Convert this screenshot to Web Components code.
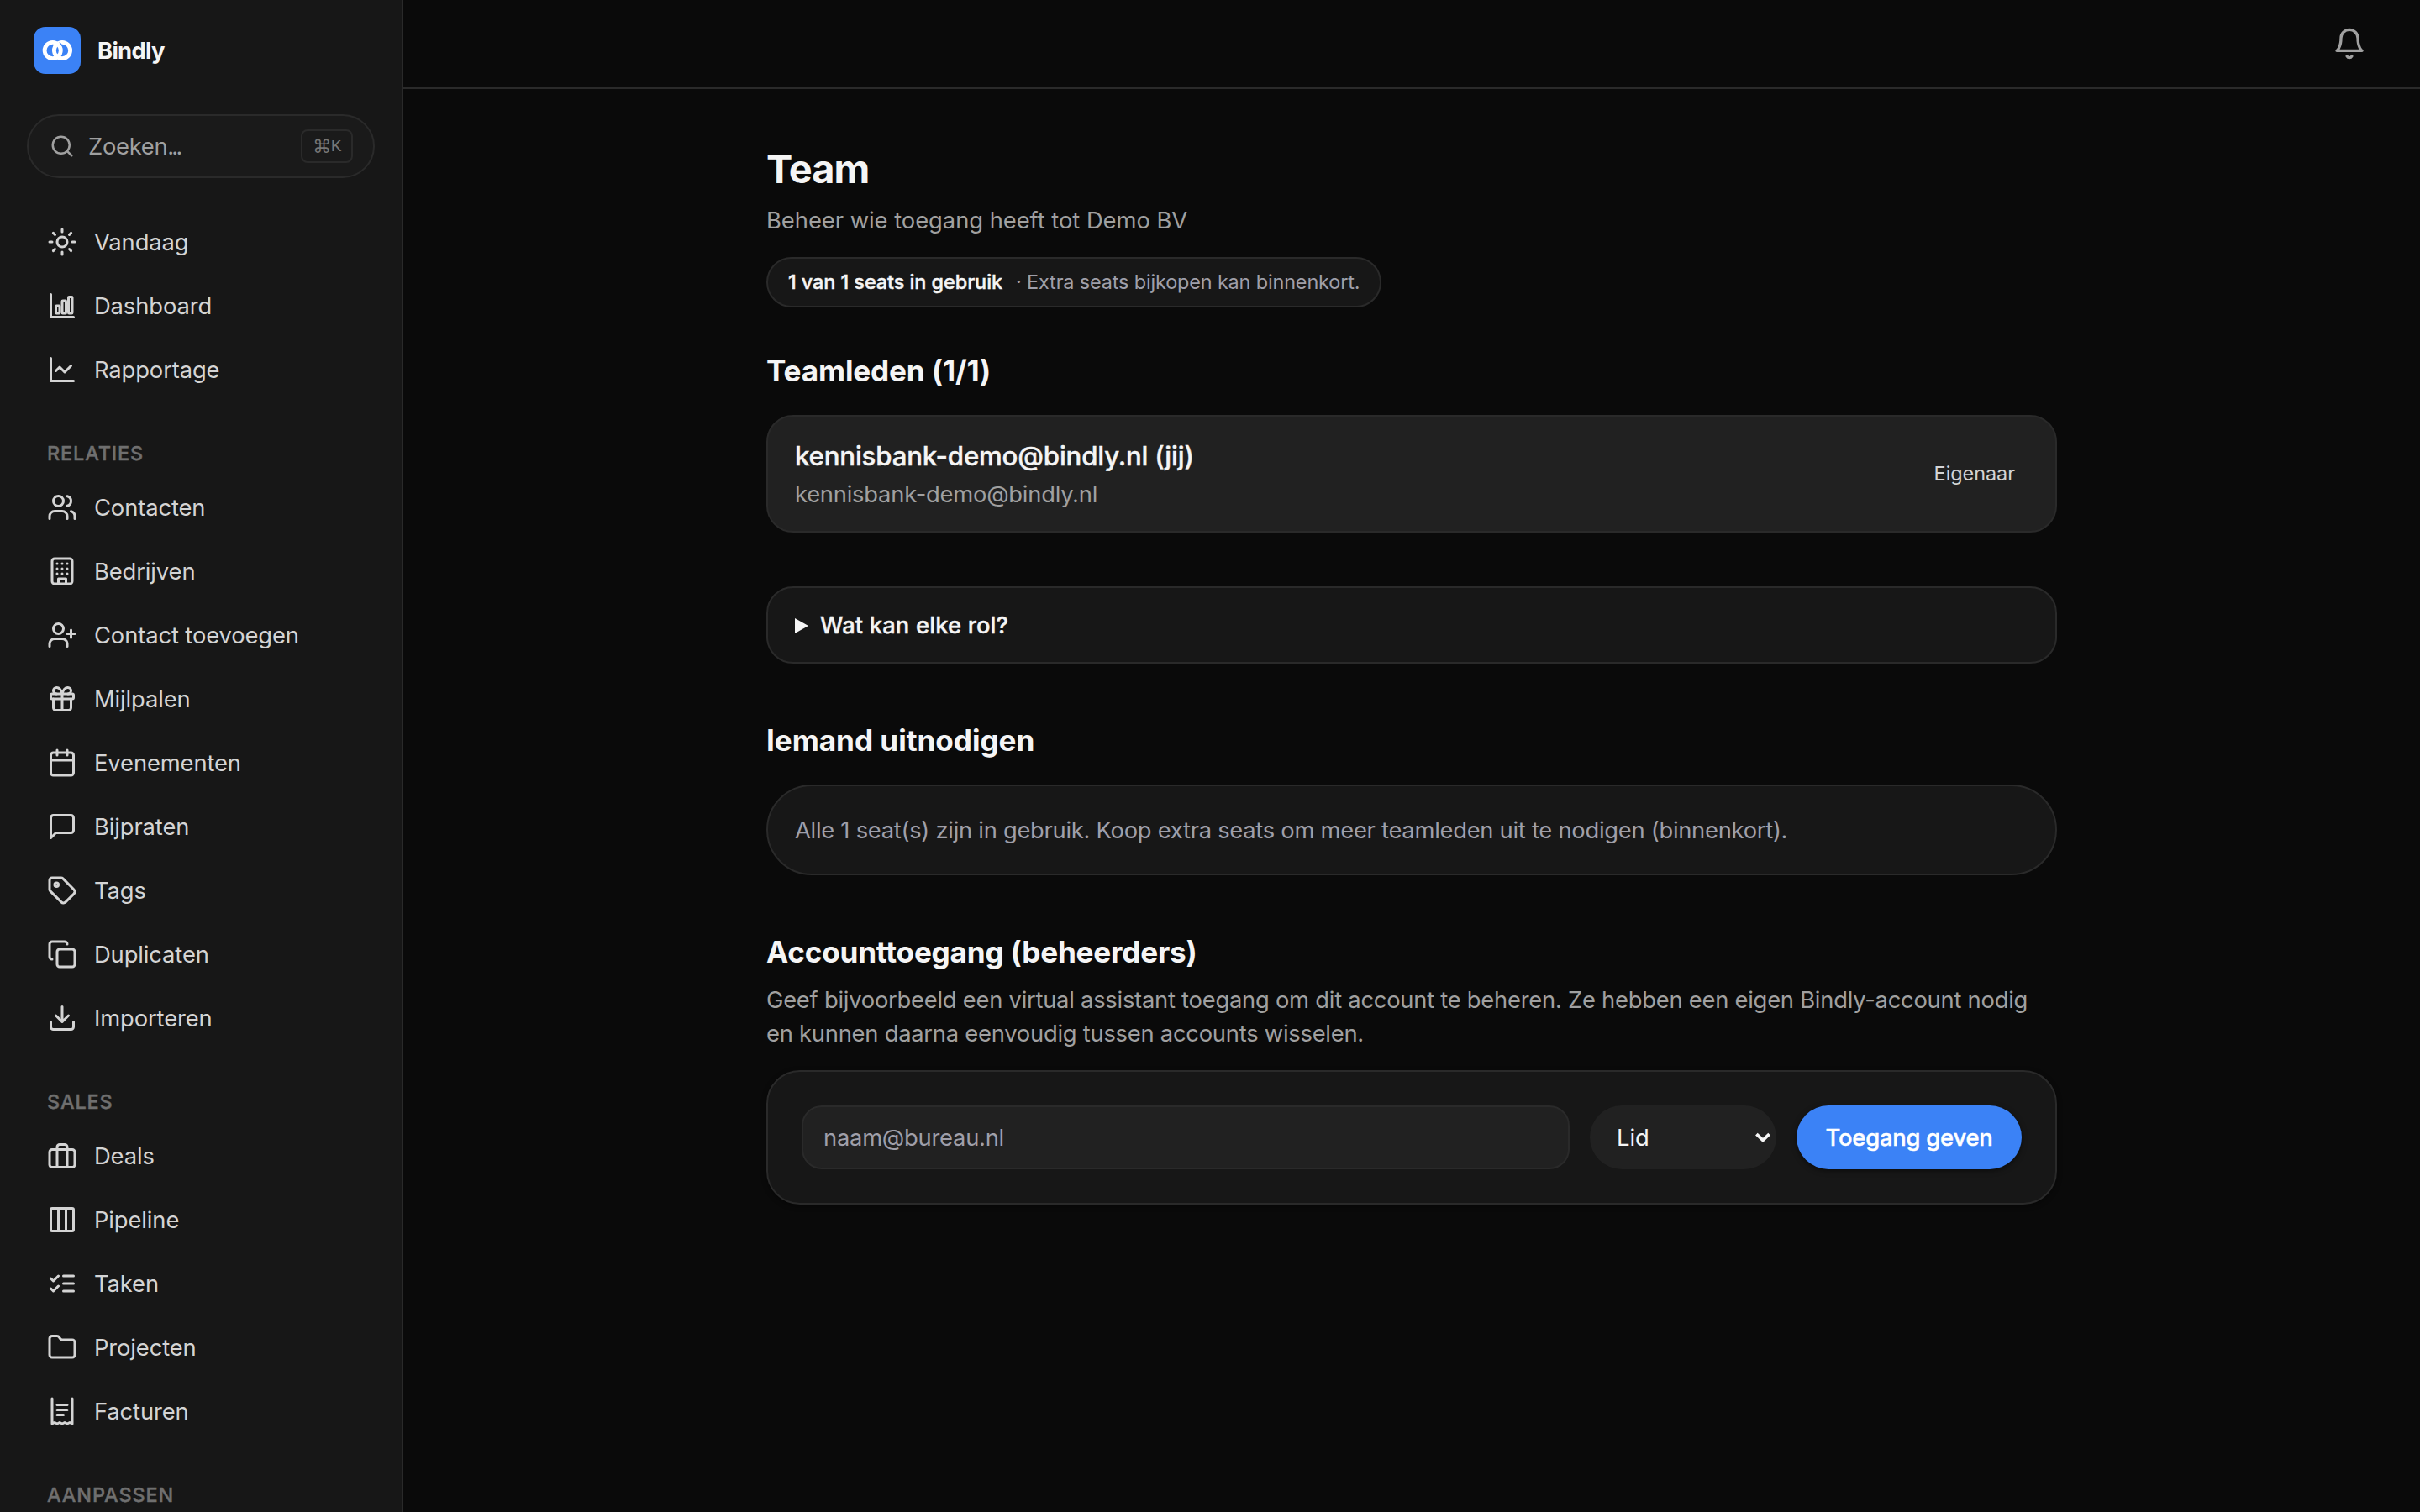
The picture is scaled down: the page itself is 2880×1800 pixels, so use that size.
<!DOCTYPE html>
<html lang="nl">
<head>
<meta charset="utf-8">
<title>Bindly - Team</title>
<style>
    :root {
        --bg: #0a0a0a;
        --surface: #171717;
        --surface-raised: #212121;
        --border: #2a2a2a;
        --text: #f5f5f5;
        --text-soft: #d4d4d4;
        --text-muted: #a0a0a0;
        --text-zinc: #9f9fa9;
        --text-faint: #6f6f6f;
        --primary: #3b82f6;
        --medium-stroke: 0.4px currentColor;
    }
    html, body {
        margin: 0;
        height: 100%;
        background: var(--bg);
    }
    body {
        font-family: Inter, "Liberation Sans", sans-serif;
        font-size: 27.36px;
        line-height: 40px;
        color: var(--text);
        overflow: hidden;
    }
</style>
</head>
<body>
<app-shell>
    <side-bar slot="sidebar">
        <nav-group>
            <nav-item icon="sun">Vandaag</nav-item>
            <nav-item icon="bars">Dashboard</nav-item>
            <nav-item icon="line">Rapportage</nav-item>
        </nav-group>
        <nav-group label="RELATIES">
            <nav-item icon="users">Contacten</nav-item>
            <nav-item icon="building">Bedrijven</nav-item>
            <nav-item icon="userPlus">Contact toevoegen</nav-item>
            <nav-item icon="gift">Mijlpalen</nav-item>
            <nav-item icon="calendar">Evenementen</nav-item>
            <nav-item icon="message">Bijpraten</nav-item>
            <nav-item icon="tag">Tags</nav-item>
            <nav-item icon="copy">Duplicaten</nav-item>
            <nav-item icon="download">Importeren</nav-item>
        </nav-group>
        <nav-group label="SALES">
            <nav-item icon="briefcase">Deals</nav-item>
            <nav-item icon="columns">Pipeline</nav-item>
            <nav-item icon="checks">Taken</nav-item>
            <nav-item icon="folder">Projecten</nav-item>
            <nav-item icon="receipt">Facturen</nav-item>
        </nav-group>
        <nav-group label="AANPASSEN"></nav-group>
    </side-bar>

    <page-header heading="Team" subtitle="Beheer wie toegang heeft tot Demo BV">
        <seat-badge>1 van 1 seats in gebruik<span slot="note">· Extra seats bijkopen kan binnenkort.</span></seat-badge>
    </page-header>
    <page-section heading="Teamleden (1/1)" style="--gap: 48px; --heading-spacing: -0.15px">
        <member-card name="kennisbank-demo@bindly.nl (jij)" email="kennisbank-demo@bindly.nl" role-label="Eigenaar"></member-card>
    </page-section>
    <role-details>Wat kan elke rol?</role-details>
    <page-section heading="Iemand uitnodigen" style="--heading-spacing: -0.05px">
        <notice-box>Alle 1 seat(s) zijn in gebruik. Koop extra seats om meer teamleden uit te nodigen (binnenkort).</notice-box>
    </page-section>
    <page-section heading="Accounttoegang (beheerders)" style="--heading-spacing: -0.22px">
        <span slot="description">Geef bijvoorbeeld een virtual assistant toegang om dit account te beheren. Ze hebben een eigen Bindly-account nodig<br>en kunnen daarna eenvoudig tussen accounts wisselen.</span>
        <access-form></access-form>
    </page-section>
</app-shell>

<script>
const ICONS = {
    sun: '<circle cx="12" cy="12" r="4"/><path d="M12 2v2M12 20v2M4.93 4.93l1.41 1.41M17.66 17.66l1.41 1.41M2 12h2M20 12h2M6.34 17.66l-1.41 1.41M19.07 4.93l-1.41 1.41"/>',
    bars: '<path d="M3 3v18h18"/><rect x="7" y="12" width="3" height="6" rx=".5"/><rect x="12" y="8" width="3" height="10" rx=".5"/><rect x="17" y="5" width="3" height="13" rx=".5"/>',
    line: '<path d="M3 3v18h18"/><path d="m19 9-5 5-4-4-3 3"/>',
    users: '<path d="M16 21v-2a4 4 0 0 0-4-4H6a4 4 0 0 0-4 4v2"/><circle cx="9" cy="7" r="4"/><path d="M22 21v-2a4 4 0 0 0-3-3.87M16 3.13a4 4 0 0 1 0 7.75"/>',
    building: '<rect x="4" y="2" width="16" height="20" rx="2"/><path d="M9 22v-4h6v4M8 6h.01M16 6h.01M12 6h.01M12 10h.01M12 14h.01M16 10h.01M16 14h.01M8 10h.01M8 14h.01"/>',
    userPlus: '<path d="M16 21v-2a4 4 0 0 0-4-4H6a4 4 0 0 0-4 4v2"/><circle cx="9" cy="7" r="4"/><path d="M19 8v6M22 11h-6"/>',
    gift: '<rect x="3" y="8" width="18" height="4" rx="1"/><path d="M12 8v13M19 12v7a2 2 0 0 1-2 2H7a2 2 0 0 1-2-2v-7M7.5 8a2.5 2.5 0 0 1 0-5A4.8 8 0 0 1 12 8a4.8 8 0 0 1 4.5-5 2.5 2.5 0 0 1 0 5"/>',
    calendar: '<path d="M8 2v4M16 2v4M3 10h18"/><rect x="3" y="4" width="18" height="18" rx="2"/>',
    message: '<path d="M21 15a2 2 0 0 1-2 2H7l-4 4V5a2 2 0 0 1 2-2h14a2 2 0 0 1 2 2z"/>',
    tag: '<path d="M12.586 2.586A2 2 0 0 0 11.172 2H4a2 2 0 0 0-2 2v7.172a2 2 0 0 0 .586 1.414l8.704 8.704a2.426 2.426 0 0 0 3.42 0l6.58-6.58a2.426 2.426 0 0 0 0-3.42z"/><circle cx="7.5" cy="7.5" r="1.5"/>',
    copy: '<rect x="8" y="8" width="14" height="14" rx="2"/><path d="M4 16c-1.1 0-2-.9-2-2V4c0-1.1.9-2 2-2h10c1.1 0 2 .9 2 2"/>',
    download: '<path d="M21 15v4a2 2 0 0 1-2 2H5a2 2 0 0 1-2-2v-4M7 10l5 5 5-5M12 15V3"/>',
    briefcase: '<rect x="2" y="7" width="20" height="14" rx="2"/><path d="M16 21V5a2 2 0 0 0-2-2h-4a2 2 0 0 0-2 2v16"/>',
    columns: '<rect x="3" y="3" width="18" height="18" rx="1"/><path d="M9 3v18M15 3v18"/>',
    checks: '<path d="m3 8 2 2 4-4M3 16l2 2 4-4M13 6h8M13 12h8M13 18h8"/>',
    folder: '<path d="M20 20a2 2 0 0 0 2-2V8a2 2 0 0 0-2-2h-7.9a2 2 0 0 1-1.69-.9L9.6 3.9A2 2 0 0 0 7.93 3H4a2 2 0 0 0-2 2v13a2 2 0 0 0 2 2Z"/>',
    receipt: '<path d="M4 2v20l2-1 2 1 2-1 2 1 2-1 2 1 2-1 2 1V2M8 7h8M8 11h8M8 15h5"/>',
    search: '<circle cx="11" cy="11" r="8"/><path d="m21 21-4.3-4.3"/>',
    bell: '<path d="M6 8a6 6 0 0 1 12 0c0 7 3 9 3 9H3s3-2 3-9M10.3 21a1.94 1.94 0 0 0 3.4 0"/>'
};

class UiIcon extends HTMLElement {
    constructor() {
        super();
        this.attachShadow({ mode: "open" });
        this.shadowRoot.innerHTML = `
            <style>
                :host {
                    display: block;
                    flex: none;
                    width: var(--icon-size, 36px);
                    height: var(--icon-size, 36px);
                }
                svg {
                    display: block;
                    width: 100%;
                    height: 100%;
                    fill: none;
                    stroke: currentColor;
                    stroke-width: 2;
                    stroke-linecap: round;
                    stroke-linejoin: round;
                }
            </style>
            <svg viewBox="0 0 24 24">${ICONS[this.getAttribute("name")] || ""}</svg>
        `;
    }
}

class AppShell extends HTMLElement {
    constructor() {
        super();
        this.attachShadow({ mode: "open" });
        this.shadowRoot.innerHTML = `
            <style>
                :host {
                    display: grid;
                    grid-template-columns: 480px 1fr;
                    height: 1800px;
                    overflow: hidden;
                }
                .column {
                    display: flex;
                    flex-direction: column;
                    min-width: 0;
                }
                header {
                    display: flex;
                    align-items: center;
                    justify-content: flex-end;
                    height: 104px;
                    padding: 0 64px;
                    border-bottom: 2px solid var(--border);
                    color: var(--text-muted);
                    --icon-size: 40px;
                }
                main {
                    width: 1536px;
                    margin: 0 auto;
                    padding-top: 64px;
                }
            </style>
            <slot name="sidebar"></slot>
            <div class="column">
                <header><ui-icon name="bell"></ui-icon></header>
                <main><slot></slot></main>
            </div>
        `;
    }
}

class SideBar extends HTMLElement {
    constructor() {
        super();
        this.attachShadow({ mode: "open" });
        this.shadowRoot.innerHTML = `
            <style>
                :host {
                    display: block;
                    box-sizing: border-box;
                    height: 1800px;
                    padding: 32px 32px 0;
                    background: var(--surface);
                    border-right: 2px solid var(--border);
                    overflow: hidden;
                }
                .brand {
                    display: flex;
                    align-items: center;
                    gap: 20px;
                    padding-left: 8px;
                    font-weight: 700;
                    letter-spacing: -0.7px;
                }
                .brand svg {
                    width: 56px;
                    height: 56px;
                }
                .search {
                    display: flex;
                    align-items: center;
                    box-sizing: border-box;
                    height: 76px;
                    margin: 48px 0 40px;
                    padding: 0 24px 0 25px;
                    border: 2px solid var(--border);
                    border-radius: 38px;
                    background: #1a1a1a;
                    color: var(--text-muted);
                    letter-spacing: -0.3px;
                    --icon-size: 30px;
                }
                .search span {
                    flex: 1;
                    margin-left: 16px;
                }
                .search i {
                    font-style: normal;
                    letter-spacing: -2.8px;
                }
                kbd {
                    display: flex;
                    align-items: center;
                    justify-content: center;
                    box-sizing: border-box;
                    width: 62px;
                    height: 40px;
                    border: 2px solid var(--border);
                    border-radius: 8px;
                    font: 21px "Liberation Mono", "DejaVu Sans", monospace;
                    letter-spacing: -0.5px;
                    color: #767676;
                }
                kbd b {
                    font: 22px "DejaVu Sans", sans-serif;
                    letter-spacing: -0.5px;
                }
            </style>
            <div class="brand">
                <svg viewBox="0 0 56 56">
                    <rect width="56" height="56" rx="14" fill="#3b82f6"/>
                    <g fill="none" stroke="#fff" stroke-width="4.8">
                        <circle cx="34" cy="28" r="9.6"/>
                        <circle cx="22.7" cy="28" r="9.6"/>
                    </g>
                    <path d="M30.8 18.35A12.6 12.6 0 0 1 34.1 22.7" fill="none" stroke="#3b82f6" stroke-width="1.1"/>
                </svg>
                <span>Bindly</span>
            </div>
            <div class="search">
                <ui-icon name="search"></ui-icon>
                <span>Zoeken<i>...</i></span>
                <kbd><b>⌘</b>K</kbd>
            </div>
            <nav><slot></slot></nav>
        `;
    }
}

class NavGroup extends HTMLElement {
    constructor() {
        super();
        const label = this.getAttribute("label");
        this.attachShadow({ mode: "open" });
        this.shadowRoot.innerHTML = `
            <style>
                :host {
                    display: block;
                }
                .label {
                    margin: 48px 0 12px;
                    padding-left: 24px;
                    font-size: 23.45px;
                    font-weight: 500;
                    line-height: 32px;
                    letter-spacing: 0.87px;
                    color: var(--text-faint);
                    -webkit-text-stroke: var(--medium-stroke);
                }
                .items {
                    display: flex;
                    flex-direction: column;
                    gap: 4px;
                }
            </style>
            ${label ? `<div class="label">${label}</div>` : ""}
            <div class="items"><slot></slot></div>
        `;
    }
}

class NavItem extends HTMLElement {
    constructor() {
        super();
        this.attachShadow({ mode: "open" });
        this.shadowRoot.innerHTML = `
            <style>
                :host {
                    display: flex;
                    align-items: center;
                    gap: 20px;
                    height: 72px;
                    padding: 0 24px;
                    letter-spacing: -0.12px;
                    color: var(--text-soft);
                }
            </style>
            <ui-icon name="${this.getAttribute("icon")}"></ui-icon>
            <span><slot></slot></span>
        `;
    }
}

class PageHeader extends HTMLElement {
    constructor() {
        super();
        this.attachShadow({ mode: "open" });
        this.shadowRoot.innerHTML = `
            <style>
                :host {
                    display: block;
                }
                h1 {
                    margin: 0 0 9px;
                    font-size: 46.9px;
                    font-weight: 700;
                    line-height: 63px;
                    letter-spacing: -0.9px;
                }
                p {
                    margin: 0 0 24px;
                    color: var(--text-muted);
                    letter-spacing: -0.04px;
                }
            </style>
            <h1>${this.getAttribute("heading")}</h1>
            <p>${this.getAttribute("subtitle")}</p>
            <slot></slot>
        `;
    }
}

class SeatBadge extends HTMLElement {
    constructor() {
        super();
        this.attachShadow({ mode: "open" });
        this.shadowRoot.innerHTML = `
            <style>
                :host {
                    display: flex;
                    align-items: center;
                    gap: 16px;
                    box-sizing: border-box;
                    width: 732px;
                    height: 60px;
                    padding: 0 24px;
                    border: 2px solid var(--border);
                    border-radius: 30px;
                    background: var(--surface);
                    font-size: 23.45px;
                    white-space: nowrap;
                }
                .used {
                    font-weight: 500;
                    letter-spacing: -0.07px;
                    -webkit-text-stroke: var(--medium-stroke);
                }
                .note {
                    color: var(--text-zinc);
                    letter-spacing: -0.15px;
                }
            </style>
            <span class="used"><slot></slot></span>
            <span class="note"><slot name="note"></slot></span>
        `;
    }
}

class PageSection extends HTMLElement {
    constructor() {
        super();
        this.attachShadow({ mode: "open" });
        this.shadowRoot.innerHTML = `
            <style>
                :host {
                    display: block;
                    margin-top: var(--gap, 64px);
                }
                h2 {
                    margin: 0;
                    padding-bottom: 2px;
                    font-size: 35.17px;
                    font-weight: 700;
                    line-height: 54px;
                    letter-spacing: var(--heading-spacing, 0);
                }
                .description {
                    display: block;
                    color: var(--text-muted);
                    letter-spacing: -0.25px;
                    white-space: nowrap;
                }
                ::slotted([slot="description"]) {
                    display: block;
                    padding-top: 8px;
                }
                .content {
                    margin-top: 24px;
                }
            </style>
            <h2>${this.getAttribute("heading")}</h2>
            <div class="description"><slot name="description"></slot></div>
            <div class="content"><slot></slot></div>
        `;
    }
}

class MemberCard extends HTMLElement {
    constructor() {
        super();
        this.attachShadow({ mode: "open" });
        this.shadowRoot.innerHTML = `
            <style>
                :host {
                    display: flex;
                    align-items: center;
                    justify-content: space-between;
                    box-sizing: border-box;
                    height: 140px;
                    padding: 0 32px;
                    border: 2px solid var(--border);
                    border-radius: 32px;
                    background: var(--surface-raised);
                }
                .name {
                    margin-bottom: 2px;
                    font-size: 31.26px;
                    font-weight: 500;
                    line-height: 46px;
                    letter-spacing: -0.2px;
                    -webkit-text-stroke: var(--medium-stroke);
                }
                .email {
                    color: var(--text-muted);
                    letter-spacing: -0.24px;
                }
                .role {
                    padding: 0 16px;
                    font-size: 23.45px;
                    color: var(--text-soft);
                    letter-spacing: -0.05px;
                }
            </style>
            <div>
                <div class="name">${this.getAttribute("name")}</div>
                <div class="email">${this.getAttribute("email")}</div>
            </div>
            <span class="role">${this.getAttribute("role-label")}</span>
        `;
    }
}

class RoleDetails extends HTMLElement {
    constructor() {
        super();
        this.attachShadow({ mode: "open" });
        this.shadowRoot.innerHTML = `
            <style>
                :host {
                    display: block;
                    margin-top: 64px;
                    padding: 24px 32px;
                    border: 2px solid var(--border);
                    border-radius: 32px;
                    background: var(--surface);
                }
                summary {
                    display: flex;
                    align-items: center;
                    gap: 14px;
                    font-weight: 500;
                    letter-spacing: 0.15px;
                    cursor: pointer;
                    list-style: none;
                    -webkit-text-stroke: var(--medium-stroke);
                }
                summary::before {
                    content: "";
                    border-style: solid;
                    border-width: 9px 0 9px 16px;
                    border-color: transparent transparent transparent currentColor;
                    margin-top: 2px;
                }
            </style>
            <details>
                <summary><slot></slot></summary>
            </details>
        `;
    }
}

class NoticeBox extends HTMLElement {
    constructor() {
        super();
        this.attachShadow({ mode: "open" });
        this.shadowRoot.innerHTML = `
            <style>
                :host {
                    display: block;
                    padding: 32px;
                    border: 2px solid var(--border);
                    border-radius: 54px;
                    background: var(--surface);
                    color: var(--text-zinc);
                    letter-spacing: -0.28px;
                }
            </style>
            <slot></slot>
        `;
    }
}

class AccessForm extends HTMLElement {
    constructor() {
        super();
        this.attachShadow({ mode: "open" });
        this.shadowRoot.innerHTML = `
            <style>
                :host {
                    display: block;
                    padding: 40px;
                    border: 2px solid var(--border);
                    border-radius: 40px;
                    background: var(--surface);
                    box-shadow: 0 2px 6px rgba(0, 0, 0, 0.4);
                }
                form {
                    display: grid;
                    grid-template-columns: 1fr 222px 268px;
                    gap: 24px;
                    height: 76px;
                }
                input, select, button {
                    box-sizing: border-box;
                    height: 76px;
                    margin: 0;
                    font: inherit;
                    color: var(--text);
                }
                input {
                    padding: 0 24px;
                    border: 2px solid var(--border);
                    border-radius: 24px;
                    background: var(--surface-raised);
                    letter-spacing: -0.25px;
                }
                input::placeholder {
                    color: var(--text-zinc);
                    opacity: 1;
                }
                .select {
                    display: grid;
                    align-items: center;
                    border-radius: 38px;
                    background: var(--surface-raised);
                }
                .select > * {
                    grid-area: 1 / 1;
                }
                select {
                    appearance: none;
                    width: 100%;
                    padding: 0 32px;
                    border: none;
                    background: none;
                    letter-spacing: 0;
                }
                .select svg {
                    justify-self: end;
                    width: 20px;
                    height: 14px;
                    margin-right: 6px;
                    pointer-events: none;
                }
                button {
                    padding: 0;
                    border: none;
                    border-radius: 38px;
                    background: var(--primary);
                    color: #fff;
                    font-weight: 500;
                    letter-spacing: -0.2px;
                    box-shadow: 0 2px 6px rgba(0, 0, 0, 0.5);
                    -webkit-text-stroke: var(--medium-stroke);
                }
            </style>
            <form>
                <input type="email" placeholder="naam@bureau.nl">
                <div class="select">
                    <select><option>Lid</option></select>
                    <svg viewBox="0 0 20 14"><path d="M2.4 3.2 10 10.4l7.6-7.2" fill="none" stroke="#f5f5f5" stroke-width="3.8"/></svg>
                </div>
                <button type="button">Toegang geven</button>
            </form>
        `;
    }
}

customElements.define("ui-icon", UiIcon);
customElements.define("app-shell", AppShell);
customElements.define("side-bar", SideBar);
customElements.define("nav-group", NavGroup);
customElements.define("nav-item", NavItem);
customElements.define("page-header", PageHeader);
customElements.define("seat-badge", SeatBadge);
customElements.define("page-section", PageSection);
customElements.define("member-card", MemberCard);
customElements.define("role-details", RoleDetails);
customElements.define("notice-box", NoticeBox);
customElements.define("access-form", AccessForm);
</script>
</body>
</html>
